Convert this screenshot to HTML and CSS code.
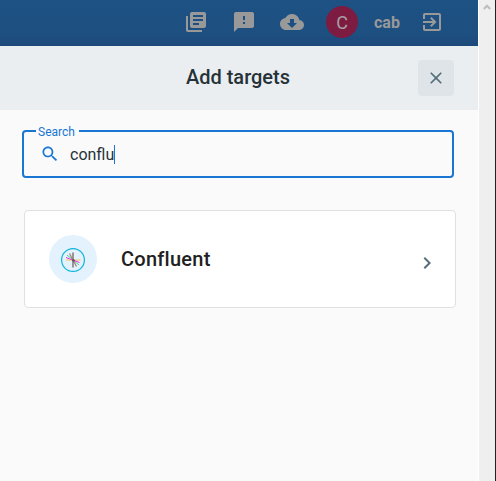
FILE: index.html
```
<!DOCTYPE html>
<html lang="en">
<head>
<meta charset="utf-8">
<title>Add targets</title>
<link rel="stylesheet" href="styles.css">
</head>
<body>
<div class="app">
  <main class="page">
    <header class="topbar">
      <svg class="icon" viewBox="0 0 24 24"><path d="M4 6H2v14c0 1.100.9 2 2 2h14v-2H4V6zm16-4H8c-1.100 0-2 .9-2 2v12c0 1.100.9 2 2 2h12c1.100 0 2-.9 2-2V4c0-1.100-.9-2-2-2zm-1 9H9V9h10v2zm-4 4H9v-2h6v2zm4-8H9V5h10v2z"/></svg>
      <svg class="icon" viewBox="0 0 24 24"><path d="M20 2H4c-1.100 0-2 .9-2 2v18l4-4h14c1.100 0 2-.9 2-2V4c0-1.100-.9-2-2-2zm-7 12h-2v-2h2v2zm0-4h-2V6h2v4z"/></svg>
      <svg class="icon" viewBox="0 0 24 24"><path d="M19.350 10.040C18.670 6.590 15.640 4 12 4 9.110 4 6.600 5.640 5.350 8.040 2.340 8.360 0 10.910 0 14c0 3.310 2.690 6 6 6h13c2.760 0 5-2.240 5-5 0-2.640-2.050-4.780-4.650-4.960zM17 13l-5 5-5-5h3V9h4v4h3z"/></svg>
      <div class="avatar">C</div>
      <span class="user">cab</span>
      <svg class="icon" viewBox="0 0 24 24"><path d="M10.090 15.590L11.500 17l5-5-5-5-1.410 1.410L12.670 11H3v2h9.670l-2.580 2.590zM19 3H5c-1.110 0-2 .9-2 2v4h2V5h14v14H5v-4H3v4c0 1.100.89 2 2 2h14c1.100 0 2-.9 2-2V5c0-1.100-.9-2-2-2z"/></svg>
    </header>
    <section class="panel-head">
      <h1 class="title">Add targets</h1>
      <button class="close" aria-label="Close"><svg viewBox="0 0 24 24"><path d="M19 6.410L17.590 5 12 10.590 6.410 5 5 6.410 10.590 12 5 17.590 6.410 19 12 13.410 17.590 19 19 17.590 13.410 12z"/></svg></button>
    </section>
    <section class="content">
      <fieldset class="search">
        <legend>Search</legend>
        <div class="field">
          <svg viewBox="0 0 24 24"><path d="M15.500 14h-.79l-.28-.27C15.410 12.590 16 11.110 16 9.500 16 5.910 13.090 3 9.500 3S3 5.910 3 9.500 5.910 16 9.500 16c1.610 0 3.090-.59 4.230-1.570l.27.28v.79l5 4.990L20.490 19l-4.990-5zm-6 0C7.010 14 5 11.990 5 9.500S7.010 5 9.500 5 14 7.010 14 9.500 11.990 14 9.500 14z"/></svg>
          <span class="query">conflu</span><span class="caret"></span>
        </div>
      </fieldset>
      <a class="card">
        <span class="logo">
          <svg viewBox="0 0 24 24">
            <circle cx="12" cy="12" r="11.400" stroke="#10b4dc" stroke-width="1.200"/>
            <path d="M5 12h14.500" stroke="#f4c66a" stroke-width="1.100"/>
            <path d="M6 7l12 10" stroke="#50d890" stroke-width="1"/>
            <path d="M5 9.500l13.500 5" stroke="#f02be0" stroke-width="1"/>
            <path d="M8.500 5.500l7 13" stroke="#a08070" stroke-width="1.200"/>
            <path d="M12 4.500v15" stroke="#7d7775" stroke-width="1.500"/>
            <circle cx="12.500" cy="12.500" r="1.200" class="hub"/>
          </svg>
        </span>
        <span class="name">Confluent</span>
        <svg class="chevron" viewBox="0 0 24 24"><path d="M10 6L8.590 7.410 13.170 12l-4.580 4.590L10 18l6-6z"/></svg>
      </a>
    </section>
  </main>
  <aside class="scrollbar"><svg viewBox="0 0 8 6"><path d="M.8 5L4 1.700 7.200 5"/></svg></aside>
</div>
</body>
</html>
```
FILE: styles.css
```
* { box-sizing: border-box; }
body {
  margin: 0;
  font-family: Roboto, "Liberation Sans", sans-serif;
  background: #fafafa;
  overflow: hidden;
}
svg { display: block; fill: currentColor; flex: none; }
.app { display: flex; width: 496px; height: 481px; }
.page { width: 478px; }
.topbar {
  height: 46px;
  padding: 0 34px 2px 184px;
  display: flex;
  align-items: center;
  background: linear-gradient(#1e5284, #1d4f80 75%, #1c497a);
  color: #999;
}
.icon { width: 24px; height: 24px; margin-right: 24px; }
.avatar {
  width: 32px;
  height: 32px;
  margin-left: -2px;
  border-radius: 50%;
  background: #7d1b41;
  color: #a6a0a3;
  font-size: 18px;
  line-height: 33px;
  text-align: center;
}
.user {
  width: 46px;
  margin-left: 16px;
  font-size: 16px;
  font-weight: 700;
}
.topbar .icon:last-child { margin-right: 0; }
.panel-head {
  height: 64px;
  padding: 0 24px;
  display: grid;
  grid-template-columns: 35px 1fr 36px;
  align-items: center;
  background: #eaeef1;
}
.title {
  grid-column: 2;
  margin: 0 1px 2px 0;
  color: #263238;
  font-size: 20px;
  line-height: 24px;
  font-weight: 500;
  text-align: center;
}
.close {
  width: 36px;
  height: 36px;
  padding: 0;
  border: 0;
  border-radius: 4px;
  background: #dfe4e8;
  color: #546e7a;
  display: grid;
  place-items: center;
}
.close svg { width: 20px; height: 20px; }
.content { padding: 13px 22px 0; }
.search {
  width: 432px;
  height: 55px;
  margin: 0;
  padding: 0 14px 0 12px;
  border: 2px solid #1976d2;
  border-radius: 4px;
  color: #1976d2;
}
.search legend {
  height: 16px;
  padding: 0 4px 0 2px;
  font-size: 12px;
  line-height: 18px;
}
.field { height: 30px; display: flex; align-items: center; padding-left: 4px; }
.field svg { width: 20px; height: 20px; }
.query { margin: 2px 0 0 10px; color: #263238; font-size: 16px; line-height: 20px; }
.caret { width: 1px; height: 19px; margin-top: 1px; background: #1976d2; }
.card {
  width: 432px;
  height: 98px;
  margin: 32px 0 0 2px;
  padding: 0 16px 0 24px;
  display: flex;
  align-items: center;
  background: #fff;
  border: 1px solid #e0e0e0;
  border-radius: 4px;
}
.logo {
  width: 48px;
  height: 48px;
  border-radius: 50%;
  background: #e3f2fd;
  display: grid;
  place-items: center;
}
.logo svg { width: 24px; height: 24px; margin-top: 2px; fill: none; }
.logo .hub { fill: #654b4b; }
.name {
  flex: 1;
  margin-left: 24px;
  color: #212121;
  font-size: 20px;
  line-height: 24px;
  font-weight: 500;
  letter-spacing: 0.25px;
}
.chevron { width: 24px; height: 24px; margin-top: 8px; color: #546e7a; }
.scrollbar {
  width: 18px;
  padding: 4px 0 0 4px;
  background: #efefef;
  border-left: 1px solid #fff;
  border-right: 1px solid #202124;
}
.scrollbar svg { width: 8px; height: 6px; fill: none; stroke: #bdbdbd; stroke-width: 2; }
```
